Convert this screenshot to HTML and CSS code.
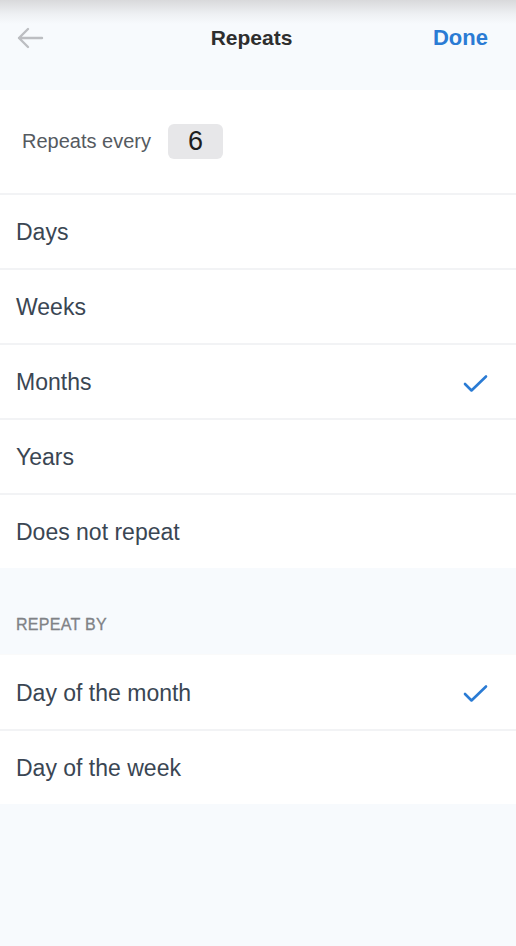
FILE: index.html
```html
<!DOCTYPE html>
<html>
<head>
<meta charset="utf-8">
<link rel="stylesheet" href="styles.css">
</head>
<body>
<div class="page">
  <header class="header">
    <svg class="back" width="28" height="22" viewBox="0 0 28 22"><path d="M26 11H3M12 2L3 11l9 9" fill="none" stroke="#bcbec2" stroke-width="2.4" stroke-linecap="round" stroke-linejoin="round"/></svg>
    <div class="title">Repeats</div>
    <div class="done">Done</div>
  </header>
  <section class="every">
    <span class="every-label">Repeats every</span>
    <span class="every-box">6</span>
  </section>
  <ul class="list">
    <li class="row">Days</li>
    <li class="row">Weeks</li>
    <li class="row">Months<svg class="check" width="28" height="22" viewBox="0 0 28 22"><path d="M4 12l6.5 6.5L25 4.5" fill="none" stroke="#2a7bd4" stroke-width="2.6" stroke-linecap="round" stroke-linejoin="round"/></svg></li>
    <li class="row">Years</li>
    <li class="row">Does not repeat</li>
  </ul>
  <div class="section-title">REPEAT BY</div>
  <ul class="list list2">
    <li class="row">Day of the month<svg class="check" width="28" height="22" viewBox="0 0 28 22"><path d="M4 12l6.5 6.5L25 4.5" fill="none" stroke="#2a7bd4" stroke-width="2.6" stroke-linecap="round" stroke-linejoin="round"/></svg></li>
    <li class="row">Day of the week</li>
  </ul>
</div>
</body>
</html>
```
FILE: styles.css
```css
html, body {
  margin: 0;
  padding: 0;
  background: #f7fafd;
  font-family: "Liberation Sans", Arial, sans-serif;
}
.page {
  width: 516px;
  min-height: 946px;
  background: #f7fafd;
}
.header {
  height: 90px;
  box-sizing: border-box;
  display: flex;
  align-items: center;
  justify-content: space-between;
  padding: 0 28px 14px 16px;
  background: linear-gradient(#d9d9db 0px, #eef0f3 14px, #f7fafd 24px, #f7fafd 100%);
}
.back {
  display: block;
  width: 28px;
}
.title {
  font-size: 21px;
  font-weight: 700;
  color: #2e2e2e;
  margin-left: 26px;
}
.done {
  font-size: 22px;
  font-weight: 700;
  color: #2a7bd4;
}
.every {
  height: 103px;
  background: #fff;
  display: flex;
  align-items: center;
  padding: 0 0 0 22px;
  box-sizing: border-box;
  gap: 17px;
}
.every-label {
  font-size: 20px;
  color: #555a5f;
}
.every-box {
  width: 55px;
  height: 35px;
  background: #e7e7e9;
  border-radius: 6px;
  font-size: 27px;
  color: #1e1e1e;
  display: flex;
  align-items: center;
  justify-content: center;
}
.list {
  list-style: none;
  margin: 0;
  padding: 0;
  background: #fff;
}
.row {
  height: 75px;
  box-sizing: border-box;
  border-top: 2px solid #f2f3f5;
  display: flex;
  align-items: center;
  justify-content: space-between;
  padding: 2px 27px 0 16px;
  font-size: 23px;
  color: #3a4653;
}
.list2 .row:first-child {
  border-top: 1px solid #fafafa;
}
.check {
  display: block;
}
.section-title {
  height: 86px;
  box-sizing: border-box;
  padding: 48px 0 0 16px;
  font-size: 16px;
  letter-spacing: 0.3px;
  color: #808286;
  -webkit-text-stroke: 0.3px #808286;
}
```
